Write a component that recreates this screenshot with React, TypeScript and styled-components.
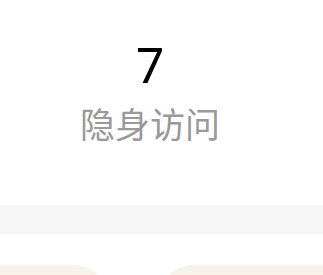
import { createGlobalStyle } from 'styled-components';
import styled from 'styled-components';

const GlobalStyle = createGlobalStyle`
	html, body {
		margin: 0;
		padding: 0;
		background: #ffffff;
	}
	body {
		font-family: 'Noto Sans', 'Noto Sans CJK SC', sans-serif;
		overflow: hidden;
	}
`;

const Page = styled.div`
	width: 323px;
	height: 275px;
	display: flex;
	flex-direction: column;
	overflow: hidden;
`;

const StatsRow = styled.div`
	height: 205px;
	flex-shrink: 0;
	display: flex;
	width: 300px;
`;

const Stat = styled.div`
	flex: 1;
	display: flex;
	flex-direction: column;
	align-items: center;
	padding-top: 36px;
`;

const StatValue = styled.div`
	font-family: 'Noto Sans', sans-serif;
	font-size: 50px;
	line-height: 56px;
	color: #000000;
`;

const StatLabel = styled.div`
	font-family: 'Noto Sans CJK SC', sans-serif;
	font-size: 35px;
	line-height: 44px;
	margin-top: 9px;
	color: #999999;
`;

const Divider = styled.div`
	height: 29px;
	flex-shrink: 0;
	background: #f6f6f6;
`;

const CardRow = styled.div`
	display: flex;
	gap: 57px;
	padding-top: 31px;
	margin-left: -30px;
	flex-shrink: 0;
`;

const Card = styled.div<{ $width: number }>`
	width: ${(p) => p.$width}px;
	height: 120px;
	flex-shrink: 0;
	background: #f7f3ea;
	border-radius: 30px;
`;

export default function App() {
	return (
		<Page>
			<GlobalStyle />
			<StatsRow>
				<Stat>
					<StatValue>7</StatValue>
					<StatLabel>隐身访问</StatLabel>
				</Stat>
			</StatsRow>
			<Divider />
			<CardRow>
				<Card $width={135} />
				<Card $width={220} />
			</CardRow>
		</Page>
	);
}
